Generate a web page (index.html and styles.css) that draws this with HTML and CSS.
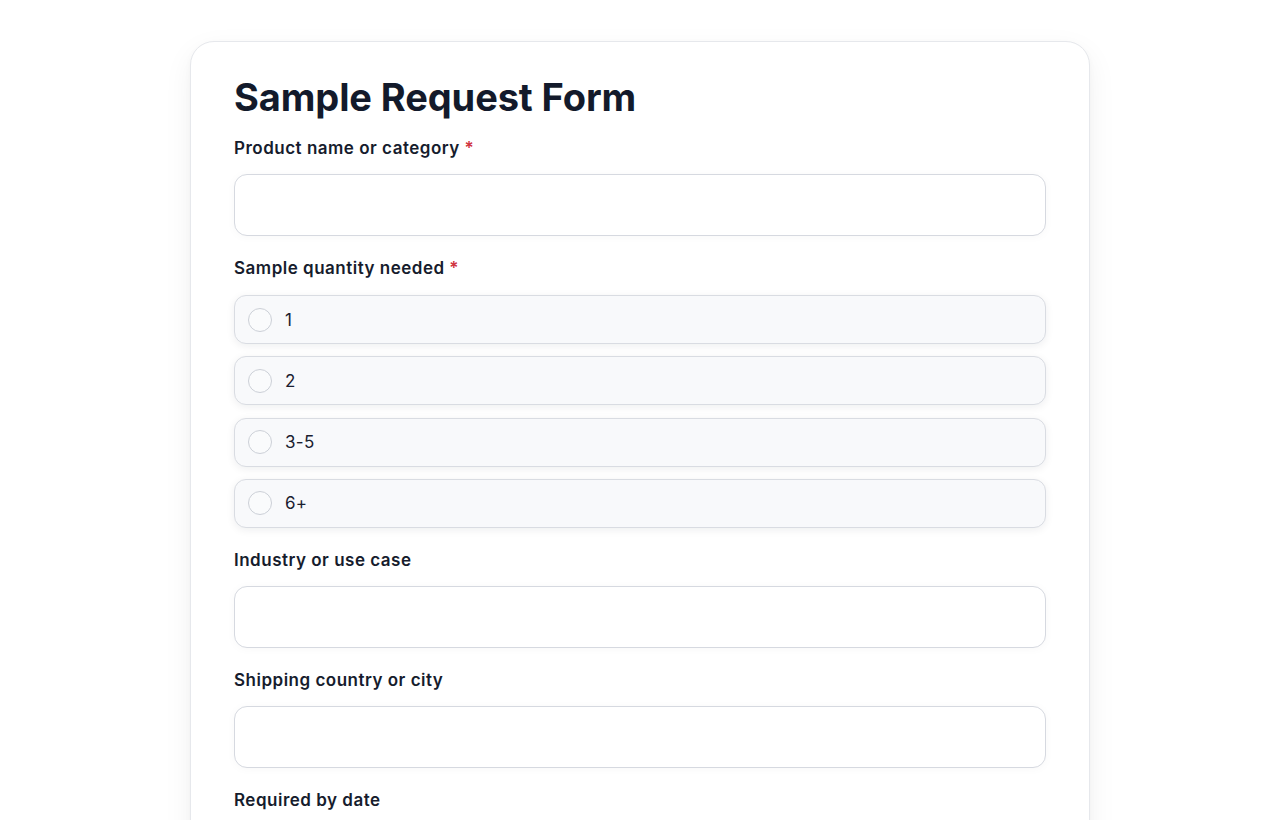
FILE: index.html
```html
<!DOCTYPE html>
<html lang="en">
<head>
<meta charset="utf-8">
<title>Sample Request Form</title>
<link rel="stylesheet" href="styles.css">
</head>
<body>
<main class="page">
  <form class="card">
    <h1 class="title">Sample Request Form</h1>

    <div class="field">
      <label class="label">Product name or category <span class="req">*</span></label>
      <input class="input" type="text">
    </div>

    <div class="field">
      <span class="label">Sample quantity needed <span class="req">*</span></span>
      <div class="options">
        <label class="option"><span class="radio"></span><span>1</span></label>
        <label class="option"><span class="radio"></span><span>2</span></label>
        <label class="option"><span class="radio"></span><span>3-5</span></label>
        <label class="option"><span class="radio"></span><span>6+</span></label>
      </div>
    </div>

    <div class="field">
      <label class="label">Industry or use case</label>
      <input class="input" type="text">
    </div>

    <div class="field">
      <label class="label">Shipping country or city</label>
      <input class="input" type="text">
    </div>

    <div class="field">
      <label class="label">Required by date</label>
      <input class="input" type="text">
    </div>
  </form>
</main>
</body>
</html>
```

FILE: styles.css
```css
* { box-sizing: border-box; }
html, body { margin: 0; padding: 0; background: #ffffff; }
body {
  font-family: Inter, "Noto Sans", "Liberation Sans", sans-serif;
  color: #141a2c;
}
.page {
  display: flex;
  justify-content: center;
  padding: 41px 0 0 0;
}
.card {
  width: 900px;
  background: #fff;
  border: 1px solid #e6e8ec;
  border-radius: 24px;
  box-shadow: 0 10px 30px rgba(15, 23, 42, 0.06), 0 2px 6px rgba(15, 23, 42, 0.03);
  padding: 31px 43px 60px;
  display: flex;
  flex-direction: column;
  gap: 21px;
}
.title {
  margin: 0 0 -5px;
  font-size: 38px;
  line-height: 48px;
  font-weight: 700;
  letter-spacing: -0.1px;
  color: #131a2b;
}
.field {
  display: flex;
  flex-direction: column;
  gap: 15px;
}
.label {
  font-size: 17px;
  line-height: 22px;
  font-weight: 600;
  letter-spacing: 0.5px;
  color: #161c2d;
}
.req { color: #d0343f; }
.input {
  height: 62px;
  width: 100%;
  border: 1px solid #d6d9e0;
  border-radius: 13px;
  background: #fff;
  box-shadow: 0 1px 10px rgba(15, 23, 42, 0.03);
  font: inherit;
  padding: 0 16px;
}
.options {
  display: flex;
  flex-direction: column;
  gap: 12.33px;
  margin-top: 1px;
}
.option {
  height: 49px;
  display: flex;
  align-items: center;
  gap: 13px;
  padding: 0 13px;
  background: #f8f9fb;
  border: 1px solid #d9dce2;
  border-radius: 12px;
  box-shadow: 0 2px 8px rgba(15, 23, 42, 0.07);
  font-size: 17px;
  letter-spacing: 0.3px;
  color: #1a2030;
}
.radio {
  width: 24px;
  height: 24px;
  border-radius: 50%;
  border: 1px solid #ccd0d7;
  background: #fafbfc;
  flex: none;
}
```
